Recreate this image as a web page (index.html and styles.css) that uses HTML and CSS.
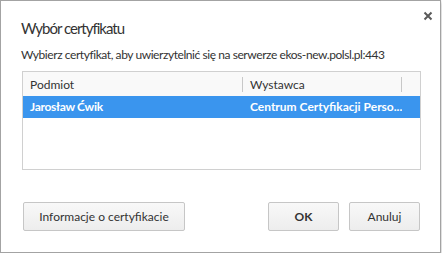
FILE: index.html
```html
<!DOCTYPE html>
<html lang="pl">
<head>
  <meta charset="UTF-8">
  <title>Wybór certyfikatu</title>
  <link rel="stylesheet" href="styles.css">
</head>
<body>

<div class="dialog">
  <div class="dialog-head">
    <h1 class="title">Wybór certyfikatu</h1>
    <button class="close" aria-label="Zamknij">
      <svg width="10" height="10" viewBox="0 0 10 10">
        <path d="M1.5 1.5 L8.5 8.5 M8.5 1.5 L1.5 8.5" stroke="#5a5a5a" stroke-width="2"/>
      </svg>
    </button>
  </div>

  <p class="subtitle">Wybierz certyfikat, aby uwierzytelnić się na serwerze ekos-new.polsl.pl:443</p>

  <!-- lista certyfikatów -->
  <div class="cert-list">
    <div class="list-head">
      <div class="col col-subject">Podmiot</div>
      <span class="sep"></span>
      <div class="col col-issuer">Wystawca</div>
      <span class="sep"></span>
    </div>
    <div class="list-row selected">
      <div class="col col-subject">Jarosław Ćwik</div>
      <div class="col col-issuer">Centrum Certyfikacji Perso...</div>
    </div>
  </div>

  <div class="dialog-foot">
    <button class="btn btn-info">Informacje o certyfikacie</button>
    <div class="actions">
      <button class="btn btn-ok">OK</button>
      <button class="btn">Anuluj</button>
    </div>
  </div>
</div>

</body>
</html>
```

FILE: styles.css
```css
html, body {
  margin: 0;
  padding: 0;
  background-color: #ffffff;
  font-family: Lato, 'Noto Sans', sans-serif;
  color: #333;
}

.dialog {
  box-sizing: border-box;
  width: 441px;
  height: 253px;
  background: #fff;
  border: 1px solid #a3a3a3;
  box-shadow: 0 2px 4px rgba(0,0,0,0.3);
  display: flex;
  flex-direction: column;
}

.dialog-head {
  display: flex;
  justify-content: space-between;
  padding: 17px 0 0 20px;
}

.title {
  margin: 0;
  font-size: 15px;
  line-height: 20px;
  letter-spacing: -1px;
  font-weight: normal;
  color: #333;
}

.close {
  border: none;
  background: none;
  padding: 0;
  margin: -9px 5px 0 0;
  width: 14px;
  height: 14px;
  display: flex;
  align-items: center;
  justify-content: center;
}

.subtitle {
  margin: 9px 0 0 20px;
  font-size: 12px;
  line-height: 16px;
  letter-spacing: -0.43px;
  white-space: nowrap;
}

.cert-list {
  box-sizing: border-box;
  height: 99px;
  margin: 8px 19px 0 21px;
  border: 1px solid #d0d0d0;
  font-size: 12px;
}

.list-head {
  display: flex;
  align-items: center;
  height: 24px;
  background: #f9f9f9;
}

.list-head .col-subject {
  width: 212px;
}

.list-head .col-issuer {
  width: 151px;
}

.col {
  padding-left: 7px;
  white-space: nowrap;
  overflow: hidden;
}

.sep {
  width: 1px;
  height: 15px;
  background: #c8c8c8;
}

.list-row {
  display: flex;
  height: 22px;
  line-height: 22px;
}

.list-row .col-subject {
  width: 213px;
  letter-spacing: -0.3px;
}

.list-row.selected {
  background: #3a95ee;
  color: #fff;
  font-weight: bold;
}

.dialog-foot {
  display: flex;
  justify-content: space-between;
  margin-top: 32px;
  padding: 0 20px 0 22px;
}

.actions {
  display: flex;
  gap: 10px;
}

.btn {
  box-sizing: border-box;
  height: 29px;
  min-width: 71px;
  padding: 0 14px;
  font-family: Lato, 'Noto Sans', sans-serif;
  font-size: 12px;
  color: #333;
  background: linear-gradient(#f8f8f8, #ededed);
  border: 1px solid #c6c6c6;
  border-radius: 2px;
}

.btn-info {
  width: 162px;
}

.btn-ok {
  font-weight: bold;
}
```
